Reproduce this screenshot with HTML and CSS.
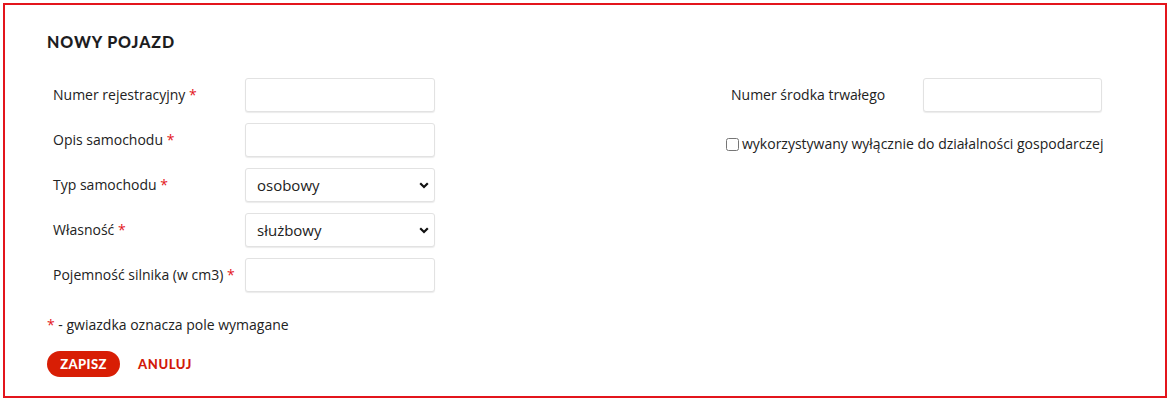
FILE: index.html
```html
<!DOCTYPE html>
<html lang="pl">
<head>
<meta charset="utf-8">
<link rel="stylesheet" href="styles.css">
</head>
<body>
<div class="panel">
  <h2 class="title">NOWY POJAZD</h2>
  <div class="cols">
    <div class="col col-left">
      <div class="row"><label class="lbl">Numer rejestracyjny <span class="req">*</span></label><input class="field" type="text"></div>
      <div class="row"><label class="lbl">Opis samochodu <span class="req">*</span></label><input class="field" type="text"></div>
      <div class="row"><label class="lbl">Typ samochodu <span class="req">*</span></label><select class="field select"><option>osobowy</option></select></div>
      <div class="row"><label class="lbl">Własność <span class="req">*</span></label><select class="field select"><option>służbowy</option></select></div>
      <div class="row"><label class="lbl">Pojemność silnika (w cm3) <span class="req">*</span></label><input class="field" type="text"></div>
    </div>
    <div class="col col-right">
      <div class="row"><label class="lbl">Numer środka trwałego</label><input class="field field-narrow" type="text"></div>
      <label class="check"><input type="checkbox" class="cb">wykorzystywany wyłącznie do działalności gospodarczej</label>
    </div>
  </div>
  <p class="note"><span class="req">*</span> - gwiazdka oznacza pole wymagane</p>
  <div class="actions">
    <button class="btn-save" type="button">ZAPISZ</button>
    <button class="btn-cancel" type="button">ANULUJ</button>
  </div>
</div>
</body>
</html>
```
FILE: styles.css
```css
* { box-sizing: border-box; }
html, body { margin: 0; padding: 0; background: #fff; }
body { font-family: "Open Sans", "Liberation Sans", sans-serif; font-size: 14px; color: #222; }

.panel {
  margin: 3px;
  width: 1164px;
  height: 395px;
  border: 2px solid #e3151c;
  padding: 27px 40px 0 42px;
}

.title {
  margin: 0;
  font-family: "Lato", "Liberation Sans", sans-serif;
  font-weight: 900;
  font-size: 16px;
  line-height: 20px;
  letter-spacing: 0.9px;
  color: #1d1d1f;
}

.cols {
  display: flex;
  gap: 291px;
  margin-top: 26px;
}
.col-left { width: 388px; display: flex; flex-direction: column; gap: 11px; }
.col-right { display: flex; flex-direction: column; }

.row { display: flex; align-items: center; height: 34px; }
.lbl { width: 198px; padding-left: 6px; flex: none; line-height: 20px; }
.col-right .lbl { width: 197px; padding-left: 5px; }
.req { color: #e3151c; }

.field {
  width: 190px;
  height: 34px;
  border: 1px solid #e2e2e2;
  border-radius: 3px;
  box-shadow: 0 1px 1px rgba(0,0,0,0.08);
  background: #fff;
  font-family: inherit;
  font-size: 15px;
  color: #222;
  padding: 0 11px;
  outline: none;
}
.field-narrow { width: 179px; }
.select {
  -webkit-appearance: none;
  appearance: none;
  background-image: url("data:image/svg+xml,%3Csvg xmlns='http://www.w3.org/2000/svg' width='10' height='7' viewBox='0 0 10 7'%3E%3Cpath d='M1.2 1.2 L5 5 L8.8 1.2' fill='none' stroke='%23111' stroke-width='2.2'/%3E%3C/svg%3E");
  background-repeat: no-repeat;
  background-position: right 5px center;
}

.check {
  display: flex;
  align-items: center;
  margin-top: 22px;
  line-height: 20px;
}
.cb {
  width: 13px;
  height: 13px;
  margin: 0 3px 0 0;
}

.note {
  margin: 23px 0 0 0;
  line-height: 20px;
}

.actions {
  display: flex;
  align-items: center;
  gap: 18px;
  margin-top: 16px;
}
.btn-save {
  height: 26px;
  width: 73px;
  border: none;
  border-radius: 13px;
  background: #d81e05;
  color: #fff;
  font-family: "Lato", "Liberation Sans", sans-serif;
  font-weight: 900;
  font-size: 13px;
  letter-spacing: 0.4px;
  padding: 0;
  cursor: pointer;
}
.btn-cancel {
  border: none;
  background: none;
  padding: 0;
  color: #d21a0a;
  font-family: "Lato", "Liberation Sans", sans-serif;
  font-weight: 900;
  font-size: 13px;
  letter-spacing: 0.6px;
  cursor: pointer;
}
```
